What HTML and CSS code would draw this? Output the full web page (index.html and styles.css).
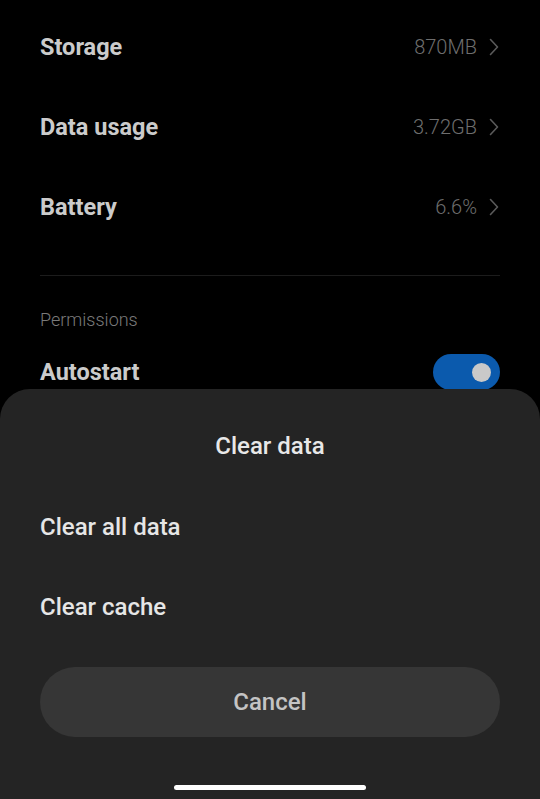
FILE: index.html
```html
<!DOCTYPE html>
<html lang="en">
<head>
    <meta charset="UTF-8">
    <meta name="viewport" content="width=device-width, initial-scale=1.0">
    <title>App info - Clear data</title>
    <link rel="stylesheet" href="styles.css">
</head>
<body>
    <main class="settings">
        <div class="row">
            <span class="row-title">Storage</span>
            <span class="row-value">870MB
                <svg class="chev" viewBox="0 0 10 18" width="10" height="18"><path d="M1.5 1.5 L8.5 9 L1.5 16.5" /></svg>
            </span>
        </div>
        <div class="row">
            <span class="row-title">Data usage</span>
            <span class="row-value">3.72GB
                <svg class="chev" viewBox="0 0 10 18" width="10" height="18"><path d="M1.5 1.5 L8.5 9 L1.5 16.5" /></svg>
            </span>
        </div>
        <div class="row">
            <span class="row-title">Battery</span>
            <span class="row-value">6.6%
                <svg class="chev" viewBox="0 0 10 18" width="10" height="18"><path d="M1.5 1.5 L8.5 9 L1.5 16.5" /></svg>
            </span>
        </div>

        <hr class="divider">

        <p class="section-label">Permissions</p>
        <div class="row row-toggle">
            <span class="row-title">Autostart</span>
            <span class="toggle on"><span class="knob"></span></span>
        </div>
    </main>

    <!-- bottom sheet over the page -->
    <div class="sheet">
        <h2 class="sheet-title">Clear data</h2>
        <div class="sheet-option">Clear all data</div>
        <div class="sheet-option">Clear cache</div>
        <button class="sheet-cancel">Cancel</button>
        <div class="home-bar"></div>
    </div>
</body>
</html>
```

FILE: styles.css
```css
* { margin: 0; padding: 0; border: none; box-sizing: border-box }
html, body { height: 100% }
body { background: #000; font-family: Roboto, "Noto Sans", "Liberation Sans", sans-serif;
    overflow: hidden; position: relative }

.settings { padding: 7px 40px 0 40px }
.row { height: 80px; display: flex; align-items: center; justify-content: space-between }
.row-title { font-size: 23.5px; font-weight: 700; color: #cbcbcb }
.row-value { display: flex; align-items: center; gap: 12px; font-size: 20px; font-weight: 300; color: #6e6e6e }
.chev { fill: none; stroke: #5a5a5a; stroke-width: 1.6; stroke-linecap: round; stroke-linejoin: round; margin-right: 1px }

.divider { height: 1px; background: #1c1c1c; margin: 28px 0 0 0 }
.section-label { font-size: 18px; font-weight: 300; color: #7a7a7a; margin-top: 33px; line-height: 22px }
.row-toggle { height: 64px; margin-top: 9px }

.toggle { width: 67px; height: 36px; border-radius: 18px; background: #0b5aad;
    display: flex; align-items: center; justify-content: flex-end; padding-right: 9px }
.knob { width: 19px; height: 19px; border-radius: 50%; background: #c9c9c9 }

.sheet { position: absolute; left: 0; right: 0; top: 389px; bottom: 0;
    background: #242424; border-radius: 30px 30px 0 0;
    display: flex; flex-direction: column; padding: 37px 40px 0 40px }
.sheet-title { font-size: 24px; font-weight: 500; color: #e8e8e8; text-align: center; line-height: 40px }
.sheet-option { height: 80px; display: flex; align-items: center; font-size: 24px; font-weight: 500; color: #e6e6e6 }
.sheet-option:first-of-type { margin-top: 21px }
.sheet-cancel { margin-top: 20px; height: 70px; border-radius: 35px; background: #363636;
    font-family: inherit; font-size: 24px; font-weight: 500; color: #c4c4c4 }
.home-bar { width: 192px; height: 5px; border-radius: 3px; background: #fff; margin: 48px auto 0 auto }
```
